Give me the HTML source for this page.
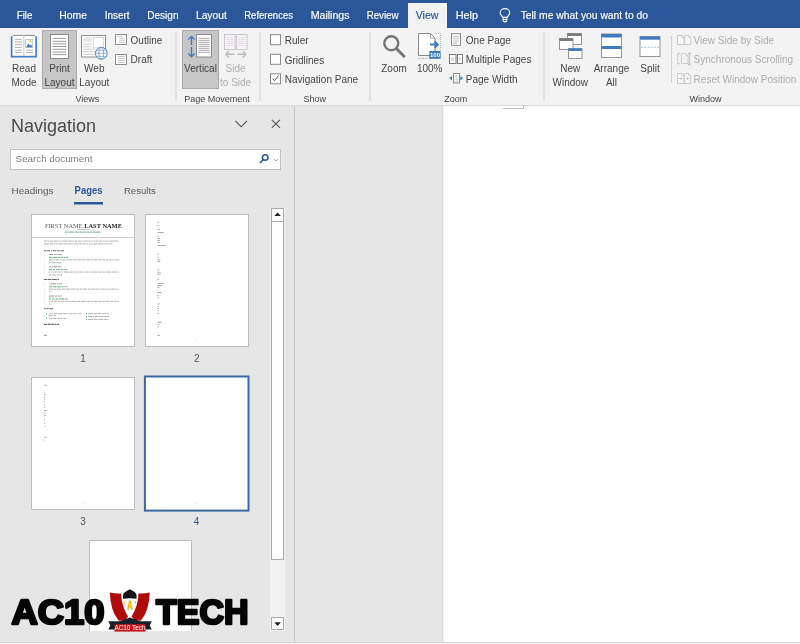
<!DOCTYPE html>
<html><head><meta charset="utf-8"><style>
html,body{margin:0;padding:0;width:800px;height:644px;overflow:hidden;background:#E6E6E6;font-family:"Liberation Sans", sans-serif;}
svg{display:block;will-change:transform}
</style></head><body>
<svg width="800" height="644" viewBox="0 0 800 644" font-family="Liberation Sans">
<rect x="0" y="0" width="800" height="28" fill="#2B579A"/>
<rect x="0" y="28" width="800" height="77" fill="#F3F3F3"/>
<rect x="408" y="3" width="39" height="26" fill="#F3F3F3"/>
<rect x="0" y="105" width="800" height="1" fill="#DADADA"/>
<rect x="0" y="106" width="800" height="536" fill="#E6E6E6"/>
<rect x="444" y="106" width="356" height="536" fill="#FFFFFF"/>
<rect x="442" y="106" width="1" height="536" fill="#DCDCDC"/>
<rect x="443" y="106" width="1" height="536" fill="#F2F2F2"/>
<rect x="294" y="106" width="1" height="536" fill="#C8C8C8"/>
<rect x="0" y="642" width="800" height="1" fill="#D4D4D4"/>
<rect x="0" y="643" width="800" height="1" fill="#F3F3F3"/>
<path d="M503 108.5 H523.5 V105" stroke="#BFBFBF" stroke-width="1" fill="none"/>
<text x="16.7" y="19" font-size="10.4" fill="#FFFFFF" text-anchor="start" font-weight="normal" font-family="Liberation Sans" textLength="15.8" lengthAdjust="spacingAndGlyphs" stroke="#FFFFFF" stroke-width="0.15">File</text>
<text x="59.2" y="19" font-size="10.4" fill="#FFFFFF" text-anchor="start" font-weight="normal" font-family="Liberation Sans" textLength="27.8" lengthAdjust="spacingAndGlyphs" stroke="#FFFFFF" stroke-width="0.15">Home</text>
<text x="104.7" y="19" font-size="10.4" fill="#FFFFFF" text-anchor="start" font-weight="normal" font-family="Liberation Sans" textLength="24.8" lengthAdjust="spacingAndGlyphs" stroke="#FFFFFF" stroke-width="0.15">Insert</text>
<text x="147.2" y="19" font-size="10.4" fill="#FFFFFF" text-anchor="start" font-weight="normal" font-family="Liberation Sans" textLength="31.3" lengthAdjust="spacingAndGlyphs" stroke="#FFFFFF" stroke-width="0.15">Design</text>
<text x="195.95" y="19" font-size="10.4" fill="#FFFFFF" text-anchor="start" font-weight="normal" font-family="Liberation Sans" textLength="30.8" lengthAdjust="spacingAndGlyphs" stroke="#FFFFFF" stroke-width="0.15">Layout</text>
<text x="244.2" y="19" font-size="10.4" fill="#FFFFFF" text-anchor="start" font-weight="normal" font-family="Liberation Sans" textLength="48.8" lengthAdjust="spacingAndGlyphs" stroke="#FFFFFF" stroke-width="0.15">References</text>
<text x="310.7" y="19" font-size="10.4" fill="#FFFFFF" text-anchor="start" font-weight="normal" font-family="Liberation Sans" textLength="38.8" lengthAdjust="spacingAndGlyphs" stroke="#FFFFFF" stroke-width="0.15">Mailings</text>
<text x="366.7" y="19" font-size="10.4" fill="#FFFFFF" text-anchor="start" font-weight="normal" font-family="Liberation Sans" textLength="31.8" lengthAdjust="spacingAndGlyphs" stroke="#FFFFFF" stroke-width="0.15">Review</text>
<text x="455.7" y="19" font-size="10.4" fill="#FFFFFF" text-anchor="start" font-weight="normal" font-family="Liberation Sans" textLength="22.3" lengthAdjust="spacingAndGlyphs" stroke="#FFFFFF" stroke-width="0.15">Help</text>
<text x="520.7" y="19" font-size="10.4" fill="#FFFFFF" text-anchor="start" font-weight="normal" font-family="Liberation Sans" textLength="127.3" lengthAdjust="spacingAndGlyphs" stroke="#FFFFFF" stroke-width="0.15">Tell me what you want to do</text>
<text x="415.7" y="19" font-size="10.4" fill="#2B579A" text-anchor="start" font-weight="normal" font-family="Liberation Sans" textLength="22.8" lengthAdjust="spacingAndGlyphs" stroke="#2B579A" stroke-width="0.15">View</text>
<g fill="none" stroke="#FFFFFF" stroke-width="1.1"><path d="M502.8 17.4 C501.6 15.6 500.1 14.6 500.1 12.7 A4.85 4.05 0 0 1 509.8 12.7 C509.8 14.6 508.3 15.6 507.1 17.4 Z"/><path d="M503.1 17.4 V20.2 Q503.1 21.9 504.95 21.9 Q506.8 21.9 506.8 20.2 V17.4 M503.1 19.5 H506.8"/></g>
<rect x="42.5" y="30.5" width="34" height="58" fill="#C6C6C6" stroke="#ABABAB" stroke-width="1"/>
<rect x="182.5" y="30.5" width="36" height="58" fill="#C6C6C6" stroke="#ABABAB" stroke-width="1"/>
<text x="24" y="71.5" font-size="10" fill="#454545" text-anchor="middle" font-weight="normal" font-family="Liberation Sans" >Read</text>
<text x="24" y="86" font-size="10" fill="#454545" text-anchor="middle" font-weight="normal" font-family="Liberation Sans" >Mode</text>
<text x="59.5" y="71.5" font-size="10" fill="#454545" text-anchor="middle" font-weight="normal" font-family="Liberation Sans" >Print</text>
<text x="59.5" y="86" font-size="10" fill="#454545" text-anchor="middle" font-weight="normal" font-family="Liberation Sans" >Layout</text>
<text x="94.3" y="71.5" font-size="10" fill="#454545" text-anchor="middle" font-weight="normal" font-family="Liberation Sans" >Web</text>
<text x="94.3" y="86" font-size="10" fill="#454545" text-anchor="middle" font-weight="normal" font-family="Liberation Sans" >Layout</text>
<text x="130.6" y="44" font-size="10" fill="#454545" text-anchor="start" font-weight="normal" font-family="Liberation Sans" >Outline</text>
<text x="130.6" y="63" font-size="10" fill="#454545" text-anchor="start" font-weight="normal" font-family="Liberation Sans" >Draft</text>
<text x="200.5" y="71.5" font-size="10" fill="#454545" text-anchor="middle" font-weight="normal" font-family="Liberation Sans" >Vertical</text>
<text x="235.6" y="71.5" font-size="10" fill="#ADADAD" text-anchor="middle" font-weight="normal" font-family="Liberation Sans" >Side</text>
<text x="235.6" y="86" font-size="10" fill="#ADADAD" text-anchor="middle" font-weight="normal" font-family="Liberation Sans" >to Side</text>
<text x="284.7" y="44" font-size="10" fill="#454545" text-anchor="start" font-weight="normal" font-family="Liberation Sans" >Ruler</text>
<text x="284.7" y="63.5" font-size="10" fill="#454545" text-anchor="start" font-weight="normal" font-family="Liberation Sans" >Gridlines</text>
<text x="284.7" y="83" font-size="10" fill="#454545" text-anchor="start" font-weight="normal" font-family="Liberation Sans" >Navigation Pane</text>
<text x="394" y="71.5" font-size="10" fill="#454545" text-anchor="middle" font-weight="normal" font-family="Liberation Sans" >Zoom</text>
<text x="429.7" y="71.5" font-size="10" fill="#454545" text-anchor="middle" font-weight="normal" font-family="Liberation Sans" >100%</text>
<text x="465.8" y="43.6" font-size="10" fill="#454545" text-anchor="start" font-weight="normal" font-family="Liberation Sans" >One Page</text>
<text x="465.8" y="63.3" font-size="10" fill="#454545" text-anchor="start" font-weight="normal" font-family="Liberation Sans" >Multiple Pages</text>
<text x="465.8" y="82.7" font-size="10" fill="#454545" text-anchor="start" font-weight="normal" font-family="Liberation Sans" >Page Width</text>
<text x="570.3" y="71.5" font-size="10" fill="#454545" text-anchor="middle" font-weight="normal" font-family="Liberation Sans" >New</text>
<text x="570.3" y="86" font-size="10" fill="#454545" text-anchor="middle" font-weight="normal" font-family="Liberation Sans" >Window</text>
<text x="611.5" y="71.5" font-size="10" fill="#454545" text-anchor="middle" font-weight="normal" font-family="Liberation Sans" >Arrange</text>
<text x="611.5" y="86" font-size="10" fill="#454545" text-anchor="middle" font-weight="normal" font-family="Liberation Sans" >All</text>
<text x="650" y="71.5" font-size="10" fill="#454545" text-anchor="middle" font-weight="normal" font-family="Liberation Sans" >Split</text>
<text x="693.6" y="44" font-size="10" fill="#ADADAD" text-anchor="start" font-weight="normal" font-family="Liberation Sans" >View Side by Side</text>
<text x="693.6" y="63.3" font-size="10" fill="#ADADAD" text-anchor="start" font-weight="normal" font-family="Liberation Sans" >Synchronous Scrolling</text>
<text x="693.6" y="82.8" font-size="10" fill="#ADADAD" text-anchor="start" font-weight="normal" font-family="Liberation Sans" >Reset Window Position</text>
<text x="87.35" y="101.5" font-size="9" fill="#454545" text-anchor="middle" font-weight="normal" font-family="Liberation Sans" >Views</text>
<text x="217" y="101.5" font-size="9" fill="#454545" text-anchor="middle" font-weight="normal" font-family="Liberation Sans" >Page Movement</text>
<text x="314.7" y="101.5" font-size="9" fill="#454545" text-anchor="middle" font-weight="normal" font-family="Liberation Sans" >Show</text>
<text x="455.8" y="101.5" font-size="9" fill="#454545" text-anchor="middle" font-weight="normal" font-family="Liberation Sans" >Zoom</text>
<text x="705.5" y="101.5" font-size="9" fill="#454545" text-anchor="middle" font-weight="normal" font-family="Liberation Sans" >Window</text>
<rect x="175.5" y="32" width="1" height="69" fill="#D2D2D2"/>
<rect x="259.5" y="32" width="1" height="69" fill="#D2D2D2"/>
<rect x="369.5" y="32" width="1" height="69" fill="#D2D2D2"/>
<rect x="543.5" y="32" width="1" height="69" fill="#D2D2D2"/>
<rect x="671" y="36" width="1" height="47" fill="#D2D2D2"/>
<g>
<path d="M11.6 36.3 V56.6 H36.1 V36.3" fill="none" stroke="#3F7BC1" stroke-width="1.6"/>
<rect x="13" y="35" width="22" height="21" fill="#FFFFFF"/>
<path d="M13 35.4 H35" stroke="#7E7E7E" stroke-width="0.9"/>
<path d="M13 55.6 H35" stroke="#C8C8C8" stroke-width="0.6"/>
<line x1="23.9" y1="35" x2="23.9" y2="56" stroke="#C8C8C8" stroke-width="1"/>
<g stroke="#A0A0A0" stroke-width="0.8"><path d="M15 39.4H22 M15 42H22 M15 44.6H22 M15 47.4H22 M15 50.2H22 M15 52.5H22 M26 50.2H33 M26 52.5H33"/></g>
<rect x="25.8" y="39.3" width="7" height="8.2" fill="#FFFFFF" stroke="#A0A0A0" stroke-width="0.6"/>
<path d="M26.2 47.2 L28.3 43.6 L30 45.6 L31 44.6 L32.6 47.2 Z" fill="#3F7BC1"/>
<circle cx="30.7" cy="41.4" r="0.9" fill="#F2B134"/>
</g>
<g><rect x="50.5" y="34.5" width="18" height="24" fill="#FFFFFF" stroke="#8A8A8A" stroke-width="1"/>
<g stroke="#8F8F8F" stroke-width="0.9"><path d="M52.6 38.4H66 M52.6 41.3H66 M52.6 43.9H66 M52.6 46.5H66 M52.6 49.3H66 M52.6 52H66 M52.6 54.6H66"/></g></g>
<g><rect x="81.5" y="35.5" width="24" height="21.5" fill="#FFFFFF" stroke="#8E8E8E" stroke-width="1"/>
<rect x="83.3" y="37.3" width="8.5" height="4.4" fill="#E6E6E6"/>
<rect x="93.4" y="37.6" width="10.3" height="10.2" fill="#FFFFFF" stroke="#D0D0D0" stroke-width="0.9"/>
<g stroke="#C4C4C4" stroke-width="0.9"><path d="M83.3 44.2H91.8 M83.3 46.7H91.8 M83.3 49.2H95 M83.3 51.7H95 M83.3 54.2H95"/></g>
<circle cx="101.3" cy="53.3" r="5.9" fill="#FFFFFF" stroke="#3F7BC1" stroke-width="0.9"/>
<g fill="none" stroke="#5B8FCB" stroke-width="0.65"><ellipse cx="101.3" cy="53.3" rx="2.4" ry="5.9"/><path d="M95.4 53.3H107.2 M96.3 50.3H106.3 M96.3 56.3H106.3"/></g></g>
<g><rect x="115.5" y="34.5" width="11" height="10" fill="#FFFFFF" stroke="#8E8E8E" stroke-width="1"/>
<g stroke="#A5A5A5" stroke-width="0.6"><path d="M117.3 36.3H122 M119.4 38.3H124.8 M119.4 40.3H124.8 M118.2 42.3H124.8"/></g>
<rect x="115.5" y="54.5" width="11" height="10" fill="#FFFFFF" stroke="#8E8E8E" stroke-width="1"/>
<g stroke="#A5A5A5" stroke-width="0.6"><path d="M117.6 56.5H124.8 M118.2 58.5H124.8 M118.2 60.5H124.8 M118.2 62.5H124.8"/></g></g>
<g><rect x="196.5" y="34.5" width="15" height="22.5" fill="#FFFFFF" stroke="#8C8C8C" stroke-width="1"/>
<g stroke="#8F8F8F" stroke-width="0.8"><path d="M198.5 38.3H209.5 M198.5 40.3H209.5 M198.5 42.3H209.5 M198.5 44.3H209.5 M198.5 46.3H209.5 M198.5 48.3H209.5 M198.5 50.3H209.5 M198.5 52.3H209.5"/></g>
<g fill="none" stroke="#3F7BC1" stroke-width="1.4"><path d="M191.5 36.5V45.3 M191.5 47V56.5 M188.4 39.5L191.5 36.4L194.6 39.5 M188.4 53.6L191.5 56.7L194.6 53.6"/></g></g>
<g><rect x="224.5" y="34.5" width="10.5" height="15" fill="#F8F2F8" stroke="#C9C9C9" stroke-width="1"/>
<rect x="236.5" y="34.5" width="10.5" height="15" fill="#F8F2F8" stroke="#C9C9C9" stroke-width="1"/>
<g stroke="#DCD4DC" stroke-width="0.7"><path d="M226.3 37.5H233.3 M226.3 39.5H233.3 M226.3 41.5H233.3 M226.3 43.5H233.3 M226.3 45.5H233.3 M238.3 37.5H245.3 M238.3 39.5H245.3 M238.3 41.5H245.3 M238.3 43.5H245.3 M238.3 45.5H245.3"/></g>
<g fill="none" stroke="#BDBDBD" stroke-width="1.5"><path d="M226 54.3H234.4 M229 51.3L226 54.3L229 57.3 M237.2 54.3H245.8 M242.8 51.3L245.8 54.3L242.8 57.3"/></g></g>
<rect x="270.5" y="34.7" width="10" height="10" fill="#FFFFFF" stroke="#8A8A8A" stroke-width="1"/>
<rect x="270.5" y="54.3" width="10" height="10" fill="#FFFFFF" stroke="#8A8A8A" stroke-width="1"/>
<rect x="270.5" y="73.8" width="10" height="10" fill="#FFFFFF" stroke="#8A8A8A" stroke-width="1"/>
<path d="M272.5 78.5 L274.6 80.7 L278.6 75.3" fill="none" stroke="#555" stroke-width="1"/>
<g fill="none" stroke="#767676"><circle cx="391.3" cy="43.3" r="7" stroke-width="2.4"/><path d="M396.6 48.8 L404 56.2" stroke-width="3" stroke-linecap="round"/></g>
<g><path d="M418.5 33.5 H430.5 L435 38 V55.5 H418.5 Z" fill="#FFFFFF" stroke="#8A8A8A" stroke-width="1"/>
<path d="M430.5 33.5 V38 H435" fill="none" stroke="#8A8A8A" stroke-width="0.8"/>
<path d="M436 33.5 H440.5 V50" fill="none" stroke="#9A9A9A" stroke-width="0.7" stroke-dasharray="1,1"/>
<path d="M418.5 58.5 H428" fill="none" stroke="#8A8A8A" stroke-width="0.8" stroke-dasharray="1,1.3"/>
<path d="M430 44.6 H437 M434.5 41.5 L437.8 44.6 L434.5 47.7" fill="none" stroke="#3F7BC1" stroke-width="2"/>
<rect x="429.3" y="51" width="11.3" height="7.8" fill="#3F7BC1"/>
<text x="435" y="57.3" font-size="6" font-weight="bold" fill="#FFFFFF" text-anchor="middle" font-family="Liberation Sans">100</text></g>
<g><rect x="451.5" y="33.8" width="9" height="11.5" fill="#FFFFFF" stroke="#8A8A8A" stroke-width="1"/>
<g stroke="#A0A0A0" stroke-width="0.6"><path d="M453 36.5H459 M453 38.3H459 M453 40.1H459 M453 41.9H459 M453 43.5H457"/></g></g>
<g><rect x="449.5" y="54.5" width="6.5" height="9" fill="#FFFFFF" stroke="#7A7A7A" stroke-width="1"/>
<rect x="457.5" y="54.5" width="5" height="9" fill="#FFFFFF" stroke="#7A7A7A" stroke-width="1"/>
<rect x="451" y="57.5" width="3.5" height="3" fill="#DADADA"/><rect x="458.7" y="57.5" width="2.6" height="3" fill="#DADADA"/></g>
<g><rect x="453.5" y="73.5" width="6" height="9.5" fill="#FFFFFF" stroke="#8A8A8A" stroke-width="1"/>
<g stroke="#A0A0A0" stroke-width="0.6"><path d="M455 75.8H458 M455 77.8H458 M455 79.8H458 M455 81.6H458"/></g>
<path d="M452 75.9 L449.2 78.2 L452 80.5 Z M460.3 75.9 L463.1 78.2 L460.3 80.5 Z" fill="#3F7BC1"/></g>
<g>
<rect x="567.5" y="33.5" width="14" height="11" fill="#FFFFFF" stroke="#969696" stroke-width="1"/><rect x="567.5" y="33.5" width="14" height="2.5" fill="#7A7A7A"/>
<rect x="559.5" y="38.5" width="13.5" height="11" fill="#FFFFFF" stroke="#969696" stroke-width="1"/><rect x="559.5" y="38.5" width="13.5" height="2.5" fill="#7A7A7A"/>
<rect x="568.5" y="48.5" width="13.5" height="10" fill="#FFFFFF" stroke="#969696" stroke-width="1"/><rect x="568.5" y="48.5" width="13.5" height="2.5" fill="#3F7BC1"/>
</g>
<g><rect x="601.5" y="34" width="20" height="23.5" fill="#FFFFFF" stroke="#969696" stroke-width="1"/>
<rect x="601.5" y="34" width="20" height="3.5" fill="#3F7BC1"/><rect x="601.5" y="46" width="20" height="3" fill="#3F7BC1"/></g>
<g><rect x="640" y="36.5" width="20" height="20" fill="#FFFFFF" stroke="#969696" stroke-width="1"/>
<rect x="640" y="36.5" width="20" height="3.2" fill="#3F7BC1"/>
<path d="M641 47.3H659" stroke="#6C9BD2" stroke-width="0.6" stroke-dasharray="2,1.2"/></g>
<path d="M677.5 35.5 H681.9 L684.1 37.7 V44.5 H677.5 Z" fill="#FAF6FA" stroke="#C6C6C6" stroke-width="0.9"/>
<path d="M681.9 35.5 V37.7 H684.1" fill="none" stroke="#C6C6C6" stroke-width="0.7"/>
<path d="M684.6 35.5 H688.6 L690.8000000000001 37.7 V44.5 H684.6 Z" fill="#FAF6FA" stroke="#C6C6C6" stroke-width="0.9"/>
<path d="M688.6 35.5 V37.7 H690.8000000000001" fill="none" stroke="#C6C6C6" stroke-width="0.7"/>
<path d="M680 53.5 H677.8 V63.8 H680" fill="none" stroke="#C6C6C6" stroke-width="0.9"/>
<path d="M681.5 53.5 H685.8 L688.0 55.7 V63.5 H681.5 Z" fill="#FAF6FA" stroke="#C6C6C6" stroke-width="0.9"/>
<path d="M685.8 53.5 V55.7 H688.0" fill="none" stroke="#C6C6C6" stroke-width="0.7"/>
<g stroke="#E0DCE0" stroke-width="0.6"><path d="M683 57H686.5 M683 59H686.5 M683 61H686.5 M678.8 57H679.5 M678.8 60H679.5"/></g>
<path d="M689.4 52.6 V65.2 M688 54 L689.4 52.6 L690.8 54 M688 63.8 L689.4 65.2 L690.8 63.8" fill="none" stroke="#BDBDBD" stroke-width="0.9"/>
<path d="M677.5 73.5 H681.9 L684.1 75.7 V83.5 H677.5 Z" fill="#FAF6FA" stroke="#C6C6C6" stroke-width="0.9"/>
<path d="M681.9 73.5 V75.7 H684.1" fill="none" stroke="#C6C6C6" stroke-width="0.7"/>
<path d="M684.6 73.5 H688.6 L690.8000000000001 75.7 V83.5 H684.6 Z" fill="#FAF6FA" stroke="#C6C6C6" stroke-width="0.9"/>
<path d="M688.6 73.5 V75.7 H690.8000000000001" fill="none" stroke="#C6C6C6" stroke-width="0.7"/>
<path d="M679 78.5 H682.3 M681 77.2 L682.3 78.5 L681 79.8 M690 78.5 H686.7 M688 77.2 L686.7 78.5 L688 79.8" fill="none" stroke="#BDBDBD" stroke-width="0.8"/>
<text x="10.9" y="131.5" font-size="18" fill="#4A4A4A" text-anchor="start" font-weight="normal" font-family="Liberation Sans" >Navigation</text>
<path d="M235.5 121 L241.2 126.8 L246.9 121" fill="none" stroke="#555" stroke-width="1.1"/>
<path d="M271.8 119.8 L280 127.8 M280 119.8 L271.8 127.8" fill="none" stroke="#555" stroke-width="1.1"/>
<rect x="10.5" y="149.5" width="270" height="20" fill="#FFFFFF" stroke="#C2C2C2" stroke-width="1"/>
<text x="15.6" y="162" font-size="9.8" fill="#7E7E7E" text-anchor="start" font-weight="normal" font-family="Liberation Sans" >Search document</text>
<g fill="none" stroke="#2B579A" stroke-width="1.6"><circle cx="265.2" cy="157.5" r="2.8"/><path d="M263.2 159.6 L259.8 163"/></g>
<path d="M274 159.2 L275.8 161 L277.6 159.2" fill="none" stroke="#777" stroke-width="0.8"/>
<text x="11.6" y="193.6" font-size="9.9" fill="#5A5A5A" text-anchor="start" font-weight="normal" font-family="Liberation Sans" >Headings</text>
<text x="74.6" y="193.8" font-size="10.6" fill="#2B579A" text-anchor="start" font-weight="bold" font-family="Liberation Sans" textLength="27.8" lengthAdjust="spacingAndGlyphs">Pages</text>
<text x="123.9" y="193.6" font-size="9.6" fill="#5A5A5A" text-anchor="start" font-weight="normal" font-family="Liberation Sans" >Results</text>
<rect x="74" y="202" width="29" height="2.5" fill="#2B579A"/>
<rect x="270" y="208" width="15" height="423" fill="#F0F0F0"/>
<rect x="271.5" y="208.5" width="12" height="13" fill="#FFFFFF" stroke="#ABABAB" stroke-width="1"/>
<path d="M274.3 216 L277.6 212.6 L280.9 216 Z" fill="#222"/>
<rect x="271.5" y="221.5" width="12" height="338" fill="#FFFFFF" stroke="#ABABAB" stroke-width="1"/>
<rect x="271.5" y="617.5" width="12" height="12" fill="#FFFFFF" stroke="#ABABAB" stroke-width="1"/>
<path d="M274.3 622.3 L277.6 626 L280.9 622.3 Z" fill="#222"/>
<rect x="31.5" y="214.5" width="103" height="132" fill="#FFFFFF" stroke="#B9BCC4" stroke-width="1"/>
<rect x="145.5" y="214.5" width="103" height="132" fill="#FFFFFF" stroke="#B9BCC4" stroke-width="1"/>
<rect x="31.5" y="377.5" width="103" height="132" fill="#FFFFFF" stroke="#B9BCC4" stroke-width="1"/>
<rect x="144.9" y="376.5" width="103.6" height="134.1" fill="#FFFFFF" stroke="#3A68A6" stroke-width="2"/>
<clipPath id="c5"><rect x="0" y="106" width="270" height="525"/></clipPath>
<g clip-path="url(#c5)">
<rect x="89.5" y="540.5" width="102" height="132" fill="#FFFFFF" stroke="#B9BCC4" stroke-width="1"/>
</g>
<text x="83" y="361.5" font-size="10" fill="#555" text-anchor="middle" font-weight="normal" font-family="Liberation Sans" >1</text>
<text x="196.7" y="361.5" font-size="10" fill="#555" text-anchor="middle" font-weight="normal" font-family="Liberation Sans" >2</text>
<text x="83" y="524.5" font-size="10" fill="#555" text-anchor="middle" font-weight="normal" font-family="Liberation Sans" >3</text>
<text x="196.5" y="524.5" font-size="10" fill="#2B579A" text-anchor="middle" font-weight="normal" font-family="Liberation Sans" >4</text>
<g>
<text x="83.4" y="227.8" font-size="6.4" text-anchor="middle" font-family="Liberation Serif" fill="#5A5A5A">FIRST NAME <tspan font-weight="bold" fill="#222">LAST NAME</tspan></text>
<rect x="77" y="229" width="12.5" height="0.6" fill="#AAA"/>
<path d="M64.7 232.1 H102.2" stroke="#4FA070" stroke-width="0.8" stroke-dasharray="3,0.6,6,0.6,4,0.6,7,0.6,5,0.6,8"/>
<rect x="31" y="237" width="104" height="0.8" fill="#C0C0C0"/>
<path d="M43.9 241.05 H119" stroke="#A8A8A8" stroke-width="0.9" stroke-dasharray="2.5,0.7,2.0,0.7,3.0,0.7,4.0,0.7,1.5,0.7,1.5,0.7,5.0,0.7,3.5,0.7,1.5,0.7,2.5,0.7,3.5,0.7,1.5,0.7,3.5,0.7,2.0,0.7,1.5,0.7,1.5,0.7,3.0,0.7,3.0,0.7,1.5,0.7,2.0,0.7,1.5,0.7,3.5,0.7,3.0,0.7,1.5,0.7"/>
<path d="M43.9 243.95 H111.9" stroke="#A8A8A8" stroke-width="0.9" stroke-dasharray="5.0,0.7,3.5,0.7,1.5,0.7,2.0,0.7,4.0,0.7,4.0,0.7,3.5,0.7,1.5,0.7,3.5,0.7,3.5,0.7,3.0,0.7,1.5,0.7,2.0,0.7,1.5,0.7,3.5,0.7,5.0,0.7,2.0,0.7,2.5,0.7,3.0,0.7"/>
<path d="M43.9 250.75 H64.7" stroke="#666" stroke-width="1.1" stroke-dasharray="2.0,0.7,3.5,0.7,1.5,0.7,3.5,0.7,2.5,0.7,3.5,0.7,5.0,0.7"/>
<path d="M49 254.55 H62" stroke="#8C8C8C" stroke-width="0.9" stroke-dasharray="4.0,0.7,2.0,0.7,1.5,0.7,3.5,0.7"/>
<path d="M49 257.45 H68" stroke="#5BA679" stroke-width="0.9" stroke-dasharray="3.5,0.7,4.0,0.7,2.0,0.7,2.5,0.7,1.5,0.7,3.5,0.7"/>
<path d="M49 259.85 H119" stroke="#A8A8A8" stroke-width="0.9" stroke-dasharray="4.0,0.7,1.5,0.7,3.5,0.7,1.5,0.7,3.5,0.7,2.0,0.7,3.0,0.7,4.0,0.7,3.5,0.7,3.0,0.7,5.0,0.7,2.5,0.7,3.0,0.7,3.5,0.7,3.0,0.7,2.5,0.7,2.5,0.7,2.0,0.7,5.0,0.7"/>
<path d="M49 262.75 H62" stroke="#A8A8A8" stroke-width="0.9" stroke-dasharray="2.0,0.7,4.0,0.7,5.0,0.7"/>
<path d="M49 266.75 H62" stroke="#8C8C8C" stroke-width="0.9" stroke-dasharray="2.0,0.7,1.5,0.7,3.5,0.7,2.5,0.7,3.5,0.7"/>
<path d="M49 269.65 H68" stroke="#5BA679" stroke-width="0.9" stroke-dasharray="3.0,0.7,2.5,0.7,4.0,0.7,3.0,0.7,2.5,0.7,3.5,0.7"/>
<path d="M49 272.05 H119" stroke="#A8A8A8" stroke-width="0.9" stroke-dasharray="1.5,0.7,1.5,0.7,3.5,0.7,3.0,0.7,2.0,0.7,5.0,0.7,2.5,0.7,2.0,0.7,3.0,0.7,3.0,0.7,1.5,0.7,4.0,0.7,1.5,0.7,5.0,0.7,3.5,0.7,3.5,0.7,5.0,0.7,5.0,0.7,2.5,0.7"/>
<path d="M49 274.95 H62" stroke="#A8A8A8" stroke-width="0.9" stroke-dasharray="2.5,0.7,4.0,0.7,2.5,0.7,3.5,0.7"/>
<path d="M44.3 254 V276" stroke="#C8C8C8" stroke-width="0.6" stroke-dasharray="1,1.5"/>
<path d="M43.9 279.55 H59" stroke="#666" stroke-width="1.1" stroke-dasharray="3.0,0.7,3.5,0.7,5.0,0.7,3.0,0.7"/>
<path d="M49 283.85 H62" stroke="#8C8C8C" stroke-width="0.9" stroke-dasharray="1.5,0.7,5.0,0.7,1.5,0.7,2.5,0.7"/>
<path d="M49 286.75 H68" stroke="#5BA679" stroke-width="0.9" stroke-dasharray="3.0,0.7,4.0,0.7,4.0,0.7,1.5,0.7,1.5,0.7,4.0,0.7"/>
<path d="M49 289.15 H119" stroke="#A8A8A8" stroke-width="0.9" stroke-dasharray="4.0,0.7,2.5,0.7,4.0,0.7,3.5,0.7,4.0,0.7,5.0,0.7,3.0,0.7,2.5,0.7,4.0,0.7,3.0,0.7,4.0,0.7,2.5,0.7,1.5,0.7,3.0,0.7,2.5,0.7,2.0,0.7,3.5,0.7,1.5,0.7,3.0,0.7"/>
<path d="M49 291.85 H52" stroke="#A8A8A8" stroke-width="0.9" stroke-dasharray="1.5,0.7,2.0,0.7"/>
<path d="M49 296.05 H62" stroke="#8C8C8C" stroke-width="0.9" stroke-dasharray="5.0,0.7,2.5,0.7,2.0,0.7,4.0,0.7"/>
<path d="M49 298.95 H68" stroke="#5BA679" stroke-width="0.9" stroke-dasharray="2.0,0.7,3.0,0.7,3.0,0.7,5.0,0.7,3.0,0.7"/>
<path d="M49 301.35 H119" stroke="#A8A8A8" stroke-width="0.9" stroke-dasharray="1.5,0.7,2.0,0.7,3.0,0.7,3.0,0.7,3.5,0.7,2.5,0.7,2.0,0.7,5.0,0.7,3.0,0.7,5.0,0.7,3.5,0.7,2.5,0.7,4.0,0.7,3.0,0.7,2.5,0.7,4.0,0.7,3.0,0.7,2.0,0.7,2.0,0.7"/>
<path d="M49 304.05 H52" stroke="#A8A8A8" stroke-width="0.9" stroke-dasharray="1.5,0.7,2.0,0.7"/>
<path d="M44.3 283 V304" stroke="#C8C8C8" stroke-width="0.6" stroke-dasharray="1,1.5"/>
<path d="M43.9 308.75 H53" stroke="#666" stroke-width="1.1" stroke-dasharray="2.0,0.7,2.0,0.7,4.0,0.7"/>
<path d="M49 313.65 H82" stroke="#A8A8A8" stroke-width="0.9" stroke-dasharray="2.0,0.7,1.5,0.7,3.0,0.7,5.0,0.7,3.5,0.7,2.0,0.7,2.5,0.7,2.5,0.7,1.5,0.7,2.0,0.7,3.0,0.7"/>
<path d="M49 315.65 H56" stroke="#A8A8A8" stroke-width="0.9" stroke-dasharray="3.5,0.7,2.5,0.7"/>
<path d="M49 318.45 H66" stroke="#A8A8A8" stroke-width="0.9" stroke-dasharray="3.5,0.7,3.5,0.7,2.5,0.7,2.0,0.7,4.0,0.7"/>
<path d="M88 313.65 H109" stroke="#A8A8A8" stroke-width="0.9" stroke-dasharray="5.0,0.7,3.5,0.7,3.5,0.7,4.0,0.7,4.0,0.7"/>
<path d="M88 316.55 H109" stroke="#A8A8A8" stroke-width="0.9" stroke-dasharray="4.0,0.7,1.5,0.7,3.0,0.7,5.0,0.7,5.0,0.7"/>
<path d="M88 319.45 H109" stroke="#A8A8A8" stroke-width="0.9" stroke-dasharray="5.0,0.7,4.0,0.7,5.0,0.7,3.5,0.7,3.0,0.7"/>
<rect x="46" y="313.20000000000005" width="1" height="1" fill="#5BA679"/>
<rect x="46" y="318.0" width="1" height="1" fill="#5BA679"/>
<rect x="86" y="313.20000000000005" width="1" height="1" fill="#5BA679"/>
<rect x="86" y="316.1" width="1" height="1" fill="#5BA679"/>
<rect x="86" y="319.0" width="1" height="1" fill="#5BA679"/>
<path d="M43.9 324.35 H59" stroke="#666" stroke-width="1.1" stroke-dasharray="3.0,0.7,3.0,0.7,3.0,0.7,1.5,0.7,3.0,0.7"/>
<path d="M43.9 335.25 H47" stroke="#888" stroke-width="0.9" stroke-dasharray="4.0,0.7"/>
</g>
<rect x="157.3" y="221.9" width="1.5" height="0.8" fill="#9A9A9A"/>
<rect x="157.3" y="225.2" width="1.5" height="0.8" fill="#9A9A9A"/>
<rect x="157.3" y="229.1" width="2.5" height="0.8" fill="#9A9A9A"/>
<rect x="157.3" y="232.0" width="6.5" height="0.8" fill="#9A9A9A"/>
<rect x="157.3" y="235.79999999999998" width="1.5" height="0.8" fill="#9A9A9A"/>
<rect x="157.3" y="238.29999999999998" width="3.0" height="0.8" fill="#9A9A9A"/>
<rect x="157.3" y="240.2" width="2.5" height="0.8" fill="#9A9A9A"/>
<rect x="157.3" y="242.1" width="2.0" height="0.8" fill="#9A9A9A"/>
<rect x="157.3" y="245.2" width="8.5" height="0.8" fill="#9A9A9A"/>
<rect x="157.3" y="253.7" width="1.5" height="0.8" fill="#9A9A9A"/>
<rect x="157.3" y="257.3" width="1.5" height="0.8" fill="#9A9A9A"/>
<rect x="157.3" y="259.40000000000003" width="3.0" height="0.8" fill="#9A9A9A"/>
<rect x="157.3" y="261.20000000000005" width="2.5" height="0.8" fill="#9A9A9A"/>
<rect x="157.3" y="269.40000000000003" width="2.0" height="0.8" fill="#9A9A9A"/>
<rect x="157.3" y="271.8" width="3.5" height="0.8" fill="#9A9A9A"/>
<rect x="157.3" y="273.8" width="3.5" height="0.8" fill="#9A9A9A"/>
<rect x="157.3" y="278.90000000000003" width="1.5" height="0.8" fill="#9A9A9A"/>
<rect x="157.3" y="283.20000000000005" width="6.5" height="0.8" fill="#9A9A9A"/>
<rect x="157.3" y="285.1" width="5.0" height="0.8" fill="#9A9A9A"/>
<rect x="157.3" y="286.8" width="2.0" height="0.8" fill="#9A9A9A"/>
<rect x="157.3" y="292.1" width="4.5" height="0.8" fill="#9A9A9A"/>
<rect x="157.3" y="295.0" width="1.5" height="0.8" fill="#9A9A9A"/>
<rect x="157.3" y="297.20000000000005" width="1.5" height="0.8" fill="#9A9A9A"/>
<rect x="157.3" y="303.6" width="2.5" height="0.8" fill="#9A9A9A"/>
<rect x="157.3" y="305.8" width="1.5" height="0.8" fill="#9A9A9A"/>
<rect x="157.3" y="308.1" width="1.5" height="0.8" fill="#9A9A9A"/>
<rect x="157.3" y="310.20000000000005" width="1.5" height="0.8" fill="#9A9A9A"/>
<rect x="157.3" y="313.0" width="1.5" height="0.8" fill="#9A9A9A"/>
<rect x="157.3" y="321.8" width="4.5" height="0.8" fill="#9A9A9A"/>
<rect x="157.3" y="323.90000000000003" width="1.5" height="0.8" fill="#9A9A9A"/>
<rect x="157.3" y="326.6" width="1.5" height="0.8" fill="#9A9A9A"/>
<rect x="157.3" y="335.20000000000005" width="2.5" height="0.8" fill="#9A9A9A"/>
<path d="M195 339.30 H196" stroke="#C8C8C8" stroke-width="0.6" stroke-dasharray="2.0,0.7"/>
<rect x="44" y="384.8" width="3" height="0.8" fill="#A5A5A5"/>
<rect x="44" y="391.8" width="1" height="0.8" fill="#A5A5A5"/>
<rect x="44" y="393.90000000000003" width="2" height="0.8" fill="#A5A5A5"/>
<rect x="44" y="395.90000000000003" width="1" height="0.8" fill="#A5A5A5"/>
<rect x="44" y="397.6" width="1" height="0.8" fill="#A5A5A5"/>
<rect x="44" y="399.1" width="1" height="0.8" fill="#A5A5A5"/>
<rect x="44" y="401.1" width="1" height="0.8" fill="#A5A5A5"/>
<rect x="44" y="404.90000000000003" width="1.5" height="0.8" fill="#A5A5A5"/>
<rect x="44" y="407.40000000000003" width="1.5" height="0.8" fill="#A5A5A5"/>
<rect x="44" y="410.0" width="3" height="0.8" fill="#A5A5A5"/>
<rect x="44" y="412.6" width="1.5" height="0.8" fill="#A5A5A5"/>
<rect x="44" y="414.90000000000003" width="2" height="0.8" fill="#A5A5A5"/>
<rect x="44" y="419.1" width="1" height="0.8" fill="#A5A5A5"/>
<rect x="44" y="423.1" width="1.2000000000000028" height="0.8" fill="#A5A5A5"/>
<rect x="44" y="425.90000000000003" width="1.2000000000000028" height="0.8" fill="#A5A5A5"/>
<rect x="44" y="436.8" width="3" height="0.8" fill="#A5A5A5"/>
<rect x="44" y="439.6" width="1.2000000000000028" height="0.8" fill="#A5A5A5"/>
<path d="M82.5 503.30 H83.5" stroke="#C8C8C8" stroke-width="0.6" stroke-dasharray="3.5,0.7"/>
<path d="M196 503.30 H197" stroke="#C8C8C8" stroke-width="0.6" stroke-dasharray="3.5,0.7"/>
<g>
<text x="11.4" y="624" font-size="35.5" font-weight="bold" font-family="Liberation Sans" fill="#050505" stroke="#050505" stroke-width="2.6" stroke-linejoin="round" textLength="93" lengthAdjust="spacingAndGlyphs">AC10</text>
<text x="156" y="624.3" font-size="35.5" font-weight="bold" font-family="Liberation Sans" fill="#050505" stroke="#050505" stroke-width="2.6" stroke-linejoin="round" textLength="92.6" lengthAdjust="spacingAndGlyphs">TECH</text>
<path d="M109.8 592.4 Q115 593.8 121.1 593.5 Q121.5 606 128.1 616.8 L125 620 L118.8 620.7 Q110.5 611 109.8 592.4 Z" fill="#B00B0B"/>
<path d="M149.8 592.4 Q144.6 593.8 138.5 593.5 Q138.1 606 131.5 616.8 L134.6 620 L140.8 620.7 Q149.1 611 149.8 592.4 Z" fill="#B00B0B"/>
<path d="M123 598.8 Q122.6 593 125.5 591.8 L129.85 589.2 L134.2 591.8 Q137 593 136.6 598.8 Q129.8 597.6 123 598.8 Z" fill="#151515"/>
<path d="M127 609.8 L129 600.6 L130.8 600.6 L132.8 609.8 L131.2 609.8 L130.7 607.5 L129.1 607.5 L128.6 609.8 Z M129.4 605.8 H130.4 L129.9 603.2 Z" fill="#F6B80F"/>
<rect x="123.7" y="601.2" width="1.1" height="2.4" fill="#F6B80F"/><rect x="134.9" y="601.2" width="1.1" height="2.4" fill="#F6B80F"/>
<path d="M108.3 621.2 L119.5 621.2 L129.85 617.6 L140.2 621.2 L151.75 621.2 L149.8 625.4 L151.75 629.6 L108.3 629.6 L110.3 625.4 Z" fill="#16202B"/>
<rect x="114.5" y="624.2" width="31" height="7.4" fill="#C8161D"/>
<text x="130" y="630.2" font-size="6.4" text-anchor="middle" fill="#FFFFFF" font-family="Liberation Sans">AC10 Tech</text>
</g>
</svg>
</body></html>
